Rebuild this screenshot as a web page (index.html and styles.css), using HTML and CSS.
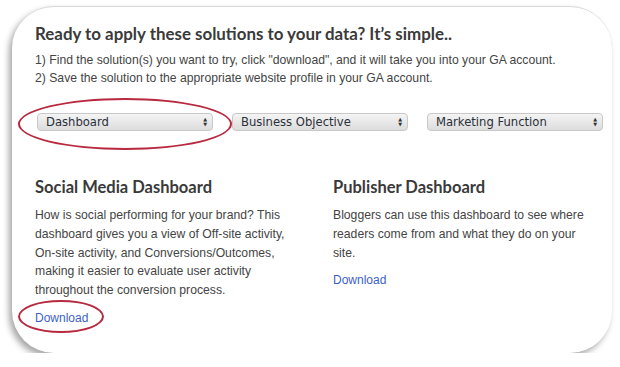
FILE: index.html
```html
<!DOCTYPE html>
<html lang="en">
<head>
    <meta charset="UTF-8">
    <title>Solutions Gallery</title>
    <link rel="stylesheet" href="styles.css">
</head>
<body>
    <div class="card">
        <h1>Ready to apply these solutions to your data? It&rsquo;s simple..</h1>
        <p class="steps">1) Find the solution(s) you want to try, click "download", and it will take you into your GA account.<br>
        2) Save the solution to the appropriate website profile in your GA account.</p>

        <div class="filters">
            <div class="select circled">
                <span>Dashboard</span><span class="arrows">&#9650;<br>&#9660;</span>
                <div class="ring"></div>
            </div>
            <div class="select">
                <span>Business Objective</span><span class="arrows">&#9650;<br>&#9660;</span>
            </div>
            <div class="select">
                <span>Marketing Function</span><span class="arrows">&#9650;<br>&#9660;</span>
            </div>
        </div>

        <div class="solutions">
            <div class="solution">
                <h2>Social Media Dashboard</h2>
                <p>How is social performing for your brand? This dashboard gives you a view of Off-site activity, On-site activity, and Conversions/Outcomes, making it easier to evaluate user activity throughout the conversion process.</p>
                <a href="#" class="download circled">Download<span class="ring small"></span></a>
            </div>
            <div class="solution">
                <h2>Publisher Dashboard</h2>
                <p>Bloggers can use this dashboard to see where readers come from and what they do on your site.</p>
                <a href="#" class="download">Download</a>
            </div>
        </div>
    </div>
</body>
</html>
```

FILE: styles.css
```css
body{
    margin: 0;
    background: #fff;
    font-family: "Liberation Sans", Arial, sans-serif;
}
.card{
    margin: 6px 8px 0 12px;
    width: 600px;
    height: 347px;
    box-sizing: border-box;
    padding: 16px 8px 0 23px;
    background: #fff;
    border-top: 1px solid #d8d8d8;
    border-radius: 42px;
    box-shadow: -3px 4px 6px rgba(0,0,0,0.35);
}
h1{
    margin: 0;
    font-family: Lato, sans-serif;
    font-weight: bold;
    font-size: 16.9px;
    color: #3a3a3a;
}
.steps{
    margin: 7px 0 0;
    font-size: 12.2px;
    line-height: 18px;
    color: #444;
}
.filters{
    display: flex;
    gap: 19px;
    margin: 26px 0 0 2px;
}
.select{
    position: relative;
    width: 176px;
    height: 18px;
    box-sizing: border-box;
    display: flex;
    justify-content: space-between;
    align-items: center;
    padding: 0 5px 0 8px;
    border: 1px solid #c8c8c8;
    border-radius: 4px;
    background: linear-gradient(#f4f4f4, #dcdcdc);
    font-family: "DejaVu Sans", sans-serif;
    font-size: 11.6px;
    color: #2a2f3a;
}
.arrows{
    font-size: 5px;
    line-height: 5px;
    text-align: center;
    color: #333;
}
.ring{
    position: absolute;
    left: -20px;
    top: -16px;
    width: 210px;
    height: 48px;
    border: 2px solid #b8283e;
    border-radius: 50%;
}
.solutions{
    display: flex;
    gap: 40px;
    margin-top: 46px;
}
.solution{
    width: 258px;
}
h2{
    margin: 0;
    font-family: Lato, sans-serif;
    font-weight: bold;
    font-size: 16.5px;
    color: #3a3a3a;
}
.solution p{
    margin: 9px 0 0;
    font-size: 12.2px;
    line-height: 18.8px;
    color: #444;
}
.download{
    position: relative;
    display: inline-block;
    margin-top: 11px;
    font-size: 12px;
    color: #3d5fc4;
    text-decoration: none;
}
.ring.small{
    left: -17px;
    top: -11px;
    width: 82px;
    height: 29px;
}
```
